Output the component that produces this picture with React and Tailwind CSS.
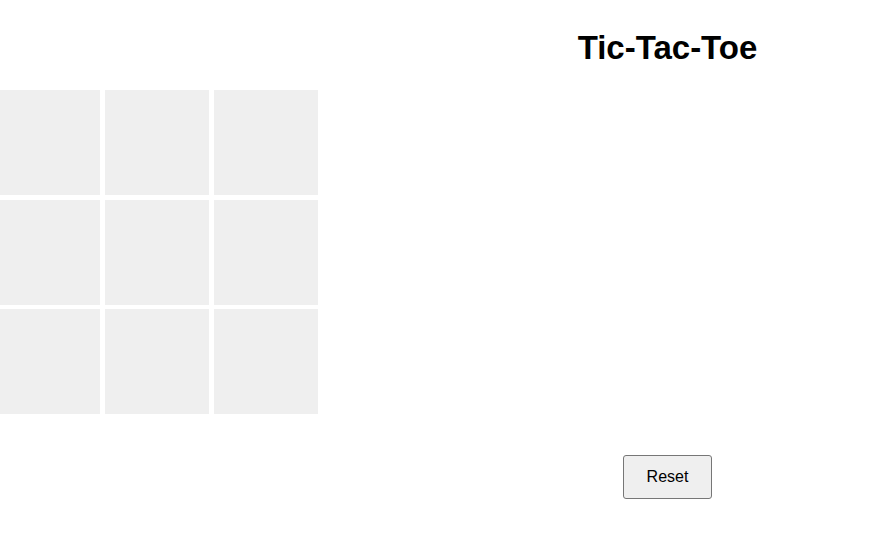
import { useState } from 'react'

export default function App() {
  const [board, setBoard] = useState(Array(9).fill(null))
  const [xNext, setXNext] = useState(true)

  function play(i) {
    if (board[i]) return
    const next = board.slice()
    next[i] = xNext ? 'X' : 'O'
    setBoard(next)
    setXNext(!xNext)
  }

  function reset() {
    setBoard(Array(9).fill(null))
    setXNext(true)
  }

  return (
    <div className="flex w-full min-h-[554px] bg-white font-['Liberation_Sans',Arial,sans-serif] text-black">
      <div className="-ml-[4px] pt-[90px]">
        <div className="grid grid-cols-[repeat(3,104px)] auto-rows-[105px] gap-x-[5px] gap-y-[4.5px]">
          {board.map((v, i) => (
            <button
              key={i}
              onClick={() => play(i)}
              className="bg-[#efefef] text-[48px] font-bold flex items-center justify-center"
            >
              {v}
            </button>
          ))}
        </div>
      </div>

      <div className="ml-auto w-[437px] flex flex-col items-center">
        <h1 className="mt-[29px] text-[33px] leading-[38px] font-bold">Tic-Tac-Toe</h1>
        <button
          onClick={reset}
          className="mt-[388px] w-[89px] h-[44px] bg-[#efefef] border border-[#767676] rounded-[3px] text-[16px] leading-[18px]"
        >
          Reset
        </button>
      </div>
    </div>
  )
}
